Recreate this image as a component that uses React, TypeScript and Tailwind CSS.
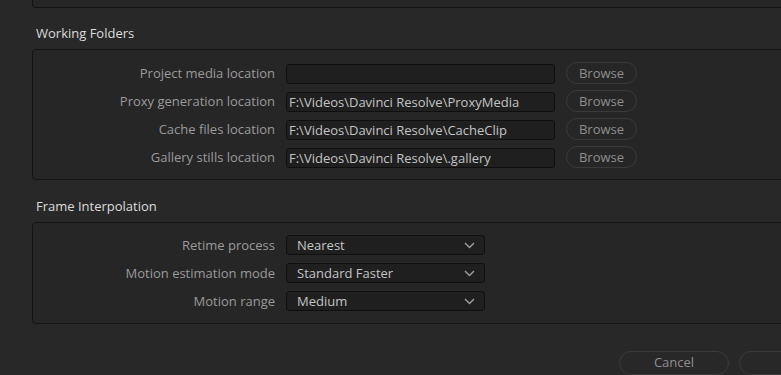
import React from "react";

const folders = [
  { label: "Project media location", value: "" },
  { label: "Proxy generation location", value: "F:\\Videos\\Davinci Resolve\\ProxyMedia" },
  { label: "Cache files location", value: "F:\\Videos\\Davinci Resolve\\CacheClip" },
  { label: "Gallery stills location", value: "F:\\Videos\\Davinci Resolve\\.gallery" },
];

const interp = [
  { label: "Retime process", value: "Nearest" },
  { label: "Motion estimation mode", value: "Standard Faster" },
  { label: "Motion range", value: "Medium" },
];

function Chevron() {
  return (
    <svg width="11" height="7" viewBox="0 0 11 7" fill="none">
      <polyline points="1,1 5.5,5.5 10,1" stroke="#9a9a9a" strokeWidth="1.5" />
    </svg>
  );
}

export default function App() {
  return (
    <div
      className="w-[781px] h-[375px] overflow-hidden bg-[#282828] text-[13px]"
      style={{ fontFamily: '"Open Sans", "Noto Sans", sans-serif' }}
    >
      <div className="pl-[32px] -mr-[8px] flex flex-col">
        <div className="h-[8px] border-b border-l border-r border-[#141414] rounded-b-[4px] bg-[#262626]" />

        <div className="mt-[16px] h-[18px] leading-[18px] pl-[4px] text-[#dcdcdc]">Working Folders</div>

        <div className="mt-[7px] border border-[#141414] rounded-[4px] bg-[#262626] pt-[12px] pb-[11px] flex flex-col gap-[6px]">
          {folders.map((f) => (
            <div key={f.label} className="flex items-center h-[22px]">
              <div className="w-[242px] text-right text-[#9a9a9a] leading-[18px]">{f.label}</div>
              <div className="ml-[11px] w-[269px] h-[20px] mt-[1px] bg-[#1f1f1f] border border-[#0f0f0f] rounded-[3px] pl-[2px] text-[#c4c4c4] leading-[18px] whitespace-nowrap overflow-hidden">
                {f.value}
              </div>
              <div className="ml-[11px] w-[71px] h-[22px] rounded-full border border-[#3a3a3a] text-[#8e8e8e] flex items-center justify-center leading-[18px]">
                Browse
              </div>
            </div>
          ))}
        </div>

        <div className="mt-[17px] h-[18px] leading-[18px] pl-[4px] text-[#dcdcdc]">Frame Interpolation</div>

        <div className="mt-[7px] border border-[#141414] rounded-[4px] bg-[#262626] pt-[11px] pb-[11px] flex flex-col gap-[6px]">
          {interp.map((f) => (
            <div key={f.label} className="flex items-center h-[22px]">
              <div className="w-[242px] text-right text-[#9a9a9a] leading-[18px]">{f.label}</div>
              <div className="ml-[11px] w-[199px] h-[20px] bg-[#1f1f1f] border border-[#0f0f0f] rounded-[3px] pl-[10px] pr-[9px] text-[#c4c4c4] leading-[18px] flex items-center justify-between">
                <span>{f.value}</span>
                <Chevron />
              </div>
            </div>
          ))}
        </div>
      </div>

      <div className="mt-[27px] flex gap-[10px] pl-[619px]">
        <div className="shrink-0 w-[110px] h-[24px] rounded-full border border-[#3a3a3a] text-[#8e8e8e] flex items-center justify-center">
          Cancel
        </div>
        <div className="shrink-0 w-[110px] h-[24px] rounded-full border border-[#3a3a3a]" />
      </div>
    </div>
  );
}
